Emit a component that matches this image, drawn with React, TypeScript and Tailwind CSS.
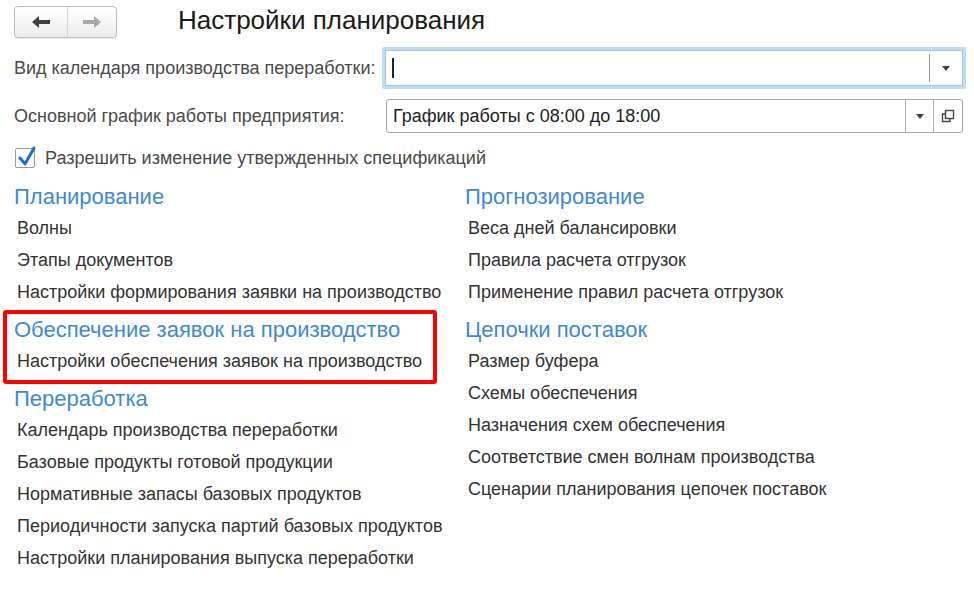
import React from "react";

const font = { fontFamily: '"Liberation Sans", Arial, sans-serif' };

function ArrowLeft({ color }: { color: string }) {
  return (
    <svg width="20" height="14" viewBox="0 0 20 14">
      <path d="M1 7 L8 1 L8 5 L19 5 L19 9 L8 9 L8 13 Z" fill={color} />
    </svg>
  );
}
function ArrowRight({ color }: { color: string }) {
  return (
    <svg width="20" height="14" viewBox="0 0 20 14">
      <path d="M19 7 L12 1 L12 5 L1 5 L1 9 L12 9 L12 13 Z" fill={color} />
    </svg>
  );
}

function Caret() {
  return (
    <svg width="8" height="5" viewBox="0 0 8 5">
      <path d="M0 0 L8 0 L4 5 Z" fill="#444" />
    </svg>
  );
}

function CopyIcon() {
  return (
    <svg width="14" height="14" viewBox="0 0 14 14" fill="none" stroke="#444" strokeWidth="1.4">
      <rect x="4.5" y="1.5" width="8" height="8" />
      <path d="M4.5 5 H1.5 V12.5 H9 V9.5" />
    </svg>
  );
}

function Link({ children }: { children: React.ReactNode }) {
  return (
    <div className="h-[32px] flex items-center pl-[3px] text-[18px] text-[#333] whitespace-nowrap">
      {children}
    </div>
  );
}

function Heading({ children }: { children: React.ReactNode }) {
  return (
    <div className="h-[37px] pt-[7px] text-[22px] leading-[30px] text-[#3d89d6] whitespace-nowrap">
      {children}
    </div>
  );
}

export default function App() {
  return (
    <div className="w-[974px] h-[594px] bg-white overflow-hidden relative" style={font}>
      {/* top bar */}
      <div className="flex items-center h-[40px] pt-[4px] pl-[14px]">
        <div className="flex h-[32px] w-[103px] rounded-[4px] border border-[#bdbdbd] bg-gradient-to-b from-white to-[#ededed] shadow-[0_1px_1px_rgba(0,0,0,0.08)]">
          <div className="w-[53px] flex items-center justify-center border-r border-[#d4d4d4]">
            <ArrowLeft color="#404040" />
          </div>
          <div className="flex-1 flex items-center justify-center">
            <ArrowRight color="#a8a8a8" />
          </div>
        </div>
        <div className="ml-[61px] text-[26px] text-[#1a1a1a] leading-[32px] -mt-[4px]">Настройки планирования</div>
      </div>

      {/* field 1 */}
      <div className="flex items-center mt-[7px] h-[42px] pl-[14px]">
        <div className="w-[368px] text-[18px] text-[#4a4a4a] whitespace-nowrap">Вид календаря производства переработки:</div>
        <div className="flex-1 mr-[8px] h-[42px] rounded-[2px] border-[3px] border-[#bcdcf8] flex items-stretch bg-white">
          <div className="flex-1 border border-[#9cc8f0] border-r-0 flex items-center pl-[6px]">
            <div className="w-[2px] h-[20px] bg-[#222]" />
          </div>
          <div className="w-[34px] border border-[#9cc8f0] border-l-0 flex items-center">
            <div className="w-[1px] h-[28px] bg-[#999]" />
            <div className="flex-1 flex items-center justify-center">
              <Caret />
            </div>
          </div>
        </div>
      </div>

      {/* field 2 */}
      <div className="flex items-center mt-[10px] h-[34px] pl-[14px]">
        <div className="w-[372px] text-[18px] text-[#4a4a4a] whitespace-nowrap">Основной график работы предприятия:</div>
        <div className="flex-1 mr-[11px] h-[34px] rounded-[3px] border border-[#a9a9a9] flex items-stretch bg-white">
          <div className="flex-1 flex items-center pl-[6px] text-[18px] text-[#222] whitespace-nowrap">График работы с 08:00 до 18:00</div>
          <div className="w-[28px] border-l border-[#b5b5b5] flex items-center justify-center">
            <Caret />
          </div>
          <div className="w-[29px] border-l border-[#b5b5b5] flex items-center justify-center">
            <CopyIcon />
          </div>
        </div>
      </div>

      {/* checkbox */}
      <div className="flex items-center mt-[13px] h-[24px] pl-[15px]">
        <div className="relative w-[20px] h-[20px] rounded-[2px] border border-[#9a9a9a] bg-white">
          <svg className="absolute -top-[3px] left-[1px]" width="20" height="22" viewBox="0 0 20 22">
            <path d="M3 12 L8 18 L17 2" fill="none" stroke="#1f6fc5" strokeWidth="3" strokeLinejoin="round" strokeLinecap="round" />
          </svg>
        </div>
        <div className="ml-[10px] text-[18px] text-[#4a4a4a] whitespace-nowrap">Разрешить изменение утвержденных спецификаций</div>
      </div>

      {/* sections */}
      <div className="flex mt-[5px] pl-[14px]">
        <div className="w-[451px]">
          <Heading>Планирование</Heading>
          <Link>Волны</Link>
          <Link>Этапы документов</Link>
          <Link>Настройки формирования заявки на производство</Link>
          <div className="relative">
            <Heading>Обеспечение заявок на производство</Heading>
            <Link>Настройки обеспечения заявок на производство</Link>
            <div className="absolute left-[-11px] top-[2px] bottom-[-7px] w-[434px] border-[4px] border-[#ff0000] rounded-[3px] pointer-events-none" />
          </div>
          <Heading>Переработка</Heading>
          <Link>Календарь производства переработки</Link>
          <Link>Базовые продукты готовой продукции</Link>
          <Link>Нормативные запасы базовых продуктов</Link>
          <Link>Периодичности запуска партий базовых продуктов</Link>
          <Link>Настройки планирования выпуска переработки</Link>
        </div>
        <div className="flex-1">
          <Heading>Прогнозирование</Heading>
          <Link>Веса дней балансировки</Link>
          <Link>Правила расчета отгрузок</Link>
          <Link>Применение правил расчета отгрузок</Link>
          <Heading>Цепочки поставок</Heading>
          <Link>Размер буфера</Link>
          <Link>Схемы обеспечения</Link>
          <Link>Назначения схем обеспечения</Link>
          <Link>Соответствие смен волнам производства</Link>
          <Link>Сценарии планирования цепочек поставок</Link>
        </div>
      </div>
    </div>
  );
}
